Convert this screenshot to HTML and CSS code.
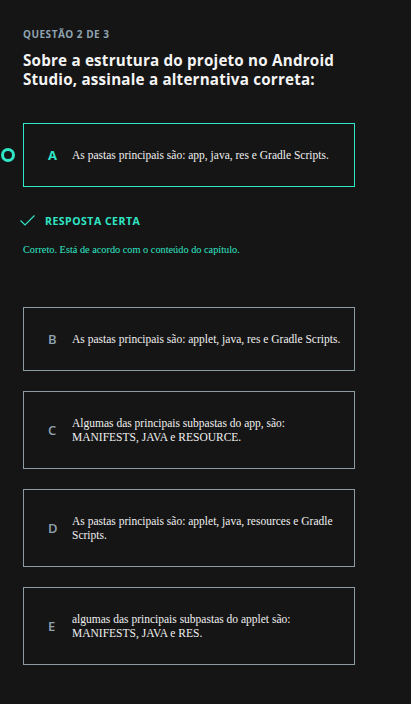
FILE: index.html
```html
<!DOCTYPE html>
<html lang="pt">
<head>
<meta charset="utf-8">
<link rel="stylesheet" href="styles.css">
</head>
<body>
<main class="page">
  <p class="label">Questão 2 de 3</p>
  <h1 class="title">Sobre a estrutura do projeto no Android Studio, assinale a alternativa correta:</h1>

  <div class="option selected">
    <span class="radio"></span>
    <span class="letter">A</span>
    <span class="text">As pastas principais são: app, java, res e Gradle Scripts.</span>
  </div>

  <div class="result">
    <svg class="check" width="15" height="12" viewBox="0 0 15 12"><path d="M0.5 5.5 L5 10 L14.5 0.5" fill="none" stroke="#2fe6c6" stroke-width="1.2"/></svg>
    <span>Resposta certa</span>
  </div>
  <p class="feedback">Correto. Está de acordo com o conteúdo do capítulo.</p>

  <div class="options">
    <div class="option">
      <span class="letter">B</span>
      <span class="text">As pastas principais são: applet, java, res e Gradle Scripts.</span>
    </div>
    <div class="option">
      <span class="letter">C</span>
      <span class="text">Algumas das principais subpastas do app, são: MANIFESTS, JAVA e RESOURCE.</span>
    </div>
    <div class="option">
      <span class="letter">D</span>
      <span class="text">As pastas principais são: applet, java, resources e Gradle Scripts.</span>
    </div>
    <div class="option">
      <span class="letter">E</span>
      <span class="text">algumas das principais subpastas do applet são: MANIFESTS, JAVA e RES.</span>
    </div>
  </div>
</main>
</body>
</html>
```

FILE: styles.css
```css
html, body {
  margin: 0;
  background: #151515;
}
.page {
  padding: 27px 0 40px 23px;
  width: 332px;
}
.label {
  margin: 0;
  font: 700 10px/14px "Open Sans", sans-serif;
  letter-spacing: 0.5px;
  text-transform: uppercase;
  color: #8fa3b0;
}
.title {
  margin: 10px 0 0;
  font: 700 15.2px/19px "Open Sans", sans-serif;
  color: #f4f4f4;
  letter-spacing: 0.2px;
}
.option {
  position: relative;
  display: flex;
  align-items: center;
  border: 1px solid #8d9ba3;
  padding: 24px 12px 24px 24px;
  min-height: 14px;
}
.option.selected {
  margin-top: 34px;
  border-color: #2fe6c6;
}
.radio {
  position: absolute;
  left: -23px;
  top: 50%;
  width: 8px;
  height: 8px;
  margin-top: -7px;
  border: 3px solid #2fe6c6;
  border-radius: 50%;
}
.letter {
  flex: 0 0 24px;
  font: 600 13px/14px "Open Sans", sans-serif;
  color: #8fa3b0;
}
.selected .letter {
  color: #2fe6c6;
  font-weight: 700;
}
.text {
  font: 400 11.5px/14px "Liberation Serif", serif;
  color: #f0f0f0;
}
.result {
  display: flex;
  align-items: center;
  gap: 10px;
  margin: 26px 0 0 -3px;
  height: 16px;
  font: 700 10.5px/16px "Open Sans", sans-serif;
  letter-spacing: 0.5px;
  text-transform: uppercase;
  color: #2fe6c6;
}
.feedback {
  margin: 14px 0 0;
  font: 400 10.3px/14px "Liberation Serif", serif;
  color: #2fe6c6;
}
.options {
  margin-top: 50px;
  display: flex;
  flex-direction: column;
  gap: 20px;
}
```
